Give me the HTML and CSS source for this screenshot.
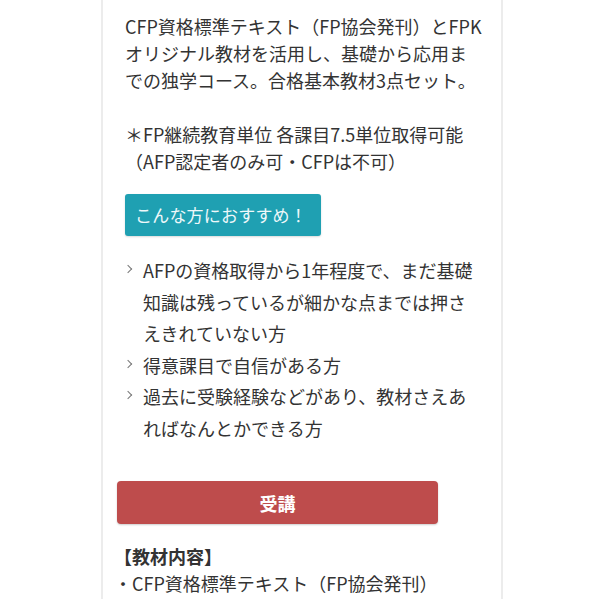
FILE: index.html
```html
<!DOCTYPE html>
<html lang="ja">
<head>
<meta charset="utf-8">
<link rel="stylesheet" href="styles.css">
</head>
<body>
<div class="page">
  <div class="card">
    <p class="intro">CFP資格標準テキスト（FP協会発刊）とFPKオリジナル教材を活用し、基礎から応用までの独学コース。合格基本教材3点セット。<br><br>＊FP継続教育単位 各課目7.5単位取得可能（AFP認定者のみ可・CFPは不可）</p>
    <div class="tag">こんな方におすすめ！</div>
    <ul class="points">
      <li>AFPの資格取得から1年程度で、まだ基礎知識は残っているが細かな点までは押さえきれていない方</li>
      <li>得意課目で自信がある方</li>
      <li>過去に受験経験などがあり、教材さえあればなんとかできる方</li>
    </ul>
    <a class="enroll">受講</a>
    <div class="contents">
      <div class="contents-title">【教材内容】</div>
      <div class="contents-item">・CFP資格標準テキスト（FP協会発刊）</div>
    </div>
  </div>
</div>
</body>
</html>
```

FILE: styles.css
```css
html, body {
  margin: 0;
  padding: 0;
  background: #ffffff;
}
body {
  font-family: "Noto Sans CJK JP", "Noto Sans", sans-serif;
  color: #333333;
  overflow: hidden;
  height: 599px;
}
.page {
  padding-left: 101px;
}
.card {
  width: 376px;
  min-height: 640px;
  border-left: 2px solid #ececec;
  border-right: 2px solid #ececec;
  padding: 13px 0 0 22px;
  box-sizing: content-box;
}
.intro {
  margin: 0;
  width: 359.9px;
  font-size: 18px;
  line-height: 27px;
}
.tag {
  display: inline-block;
  margin-top: 19px;
  background: #1fa0b2;
  color: #eef8fa;
  font-size: 17px;
  letter-spacing: 0.2px;
  height: 42px;
  line-height: 42px;
  padding: 0 14px 0 10px;
  border-radius: 3px;
  box-shadow: 0 1px 2px rgba(0, 0, 0, 0.15);
}
.points {
  list-style: none;
  margin: 19px 0 0 0;
  padding: 0;
  width: 354px;
}
.points li {
  position: relative;
  padding-left: 18px;
  font-size: 18px;
  line-height: 31.5px;
}
.points li::before {
  content: "";
  position: absolute;
  left: 0;
  top: 11px;
  width: 5px;
  height: 5px;
  border-top: 1px solid #777;
  border-right: 1px solid #777;
  transform: rotate(45deg);
}
.enroll {
  display: flex;
  align-items: center;
  justify-content: center;
  margin: 37px 0 0 -8px;
  width: 321px;
  height: 43px;
  background: #be4c4c;
  color: #ffffff;
  font-weight: bold;
  font-size: 18px;
  border-radius: 4px;
  box-shadow: 0 1px 2px rgba(0, 0, 0, 0.2);
}
.contents {
  margin: 19px 0 0 -11px;
  font-size: 18px;
  line-height: 27px;
}
.contents-title {
  font-weight: bold;
}
```
